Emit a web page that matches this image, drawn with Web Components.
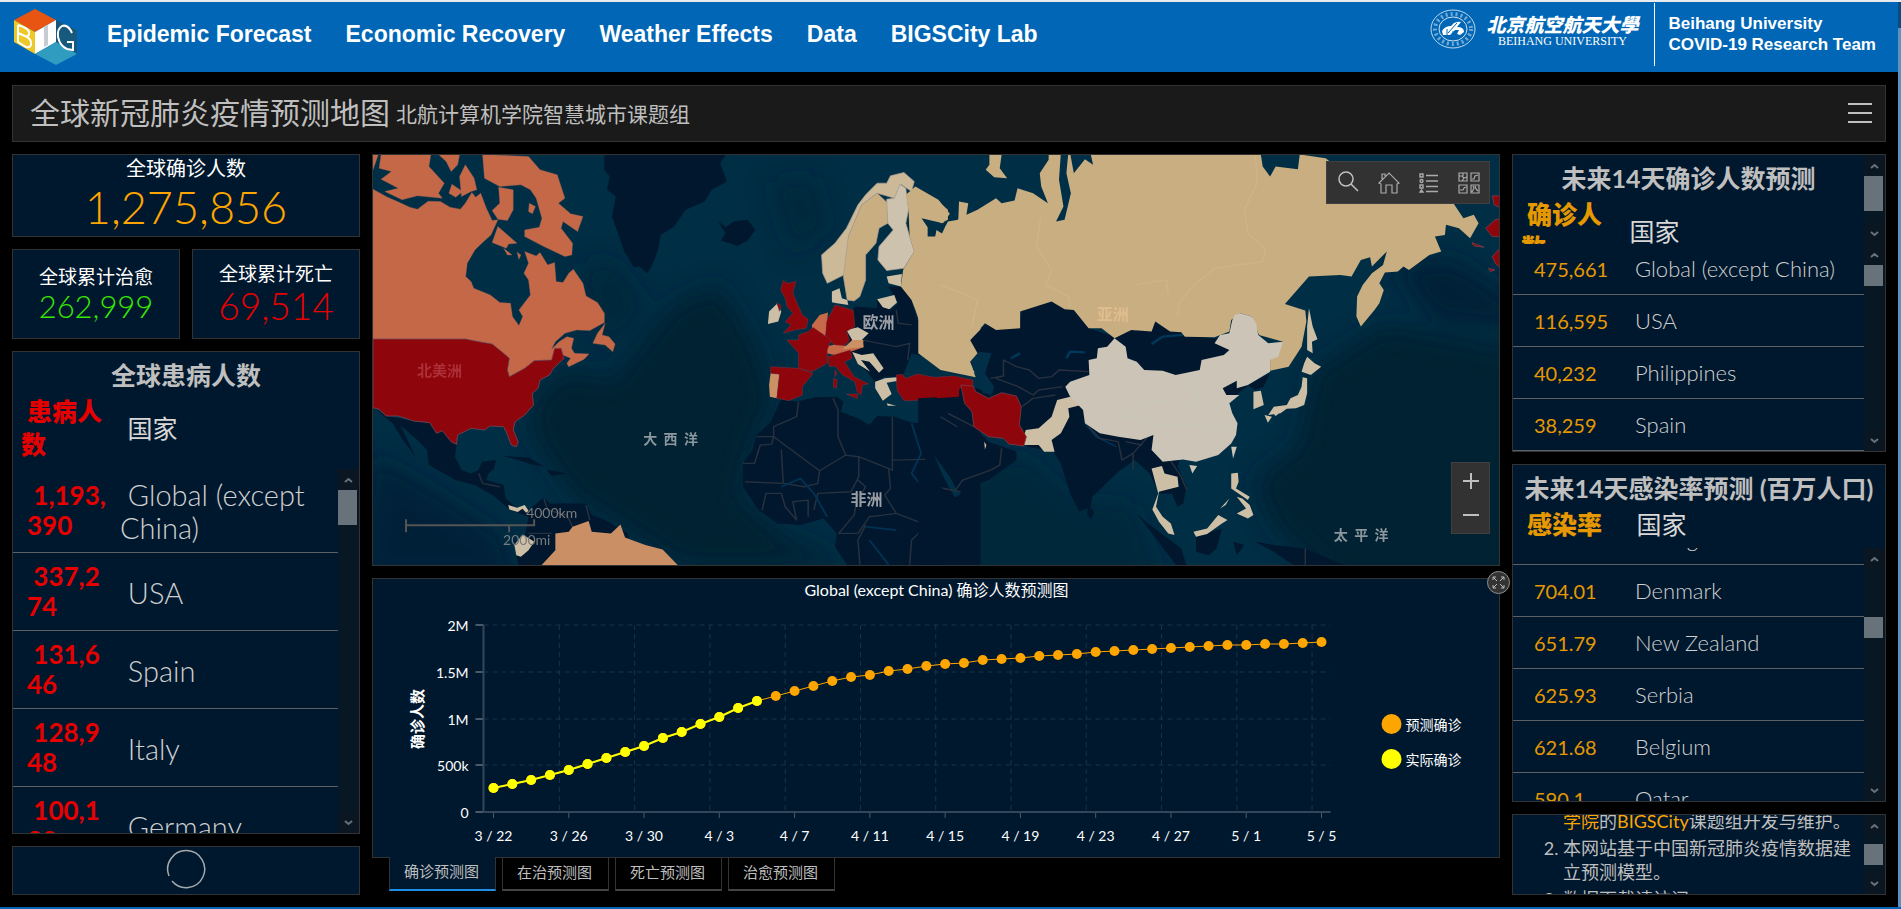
<!DOCTYPE html>
<html lang="zh-CN">
<head>
<meta charset="utf-8">
<title>全球新冠肺炎疫情预测地图</title>
<style>
  html, body { margin: 0; background: #000; }
  body { font-family: Lato, "Noto Sans CJK SC", sans-serif; color: #bfbfbf; }
</style>
</head>
<body>
<epidemic-app></epidemic-app>

<script>
const define = (name, html, setup) => {
  const template = document.createElement('template');
  template.innerHTML = html;
  customElements.define(name, class extends HTMLElement {
    connectedCallback() {
      if (this.shadowRoot) return;
      const root = this.attachShadow({ mode: 'open' });
      root.append(template.content.cloneNode(true));
      if (setup) setup(this, root);
    }
  });
};

/* ---------- header ---------- */
define('site-header', `
<style>
  :host { display: flex; align-items: stretch; height: 70px; background: #0066b5; color: #fff;
          font-family: "Liberation Sans", sans-serif; font-weight: bold; }
  .logo { width: 64px; margin: 6px 31px 0 12px; }
  nav { display: flex; align-items: center; gap: 34px; font-size: 23px; line-height: 26px; flex: 1; padding-bottom: 6px; }
  a { color: inherit; text-decoration: none; white-space: nowrap; }
  .seal { margin: 7px 10px 0 0; flex: none; }
  .name { display: flex; flex-direction: column; align-items: center; margin: 10px 16px 0 0; }
  .cn { font: italic 900 19px/23px "Noto Sans CJK SC", sans-serif; white-space: nowrap; }
  .en { font: 12px/12px "Liberation Serif", serif; white-space: nowrap; }
  .team { border-left: 1px solid #fff; margin: 1px 22px 6px 0; padding: 10px 0 0 13px; font-size: 17px; line-height: 21px; white-space: nowrap; }
</style>
<a class="logo" href="#" aria-label="BIG">
  <svg width="66" height="58" viewBox="0 0 66 58">
    <path d="M2 12 23 1 44 12 23 24Z" fill="#e85412"/>
    <path d="M2 12 23 24V46L2 34Z" fill="#ecc926"/>
    <path d="M23 24 44 12V34L23 46Z" fill="#fff"/>
    <path d="M32 19 36 17V37L32 39Z" fill="#c9cbd3"/>
    <path d="M44 12 65 22V46L44 34Z" fill="#16597c"/>
    <path d="M23 46 44 34 65 46 44 57Z" fill="#309cc0"/>
    <path d="M6 17V34L14 39Q20 40 19 34 18 30 13 28 18 29 17 24 16 20 6 17M6 25 13 28" fill="none" stroke="#fff" stroke-width="2"/>
    <path d="M60 25Q56 16 50 18 45 21 46 29 48 38 55 41L61 42V34H55" fill="none" stroke="#fff" stroke-width="2"/>
  </svg>
</a>
<nav>
  <a href="#">Epidemic Forecast</a><a href="#">Economic Recovery</a><a href="#">Weather Effects</a><a href="#">Data</a><a href="#">BIGSCity Lab</a>
</nav>
<svg class="seal" width="46" height="40" viewBox="0 0 46 40" fill="none" stroke="#fff">
  <ellipse cx="23" cy="20" rx="22" ry="19" stroke-width="1" opacity=".75"/>
  <ellipse cx="23" cy="20" rx="18" ry="15" stroke-width="4" stroke-dasharray="2 3" opacity=".45"/>
  <ellipse cx="23" cy="20" rx="14" ry="12" stroke-width="1" opacity=".8"/>
  <path d="M12 22Q15 17 21 17L24 14Q29 12 31 13L27 18Q34 18 34 23L30 26 27 25 29 21H25L20 26H13Z" fill="#fff" stroke="none"/>
  <path d="M18 24 27 14M17 20V26M23 22V27" stroke="#0066b5" stroke-width="1"/>
</svg>
<div class="name"><span class="cn">北京航空航天大學</span><span class="en">BEIHANG UNIVERSITY</span></div>
<div class="team">Beihang University<br>COVID-19 Research Team</div>
`);

define('title-bar', `
<style>
  :host { display: flex; align-items: center; height: 57px; box-sizing: border-box; border: 1px solid #333; background: #1a1a1a; padding: 0 11px 4px 17px; }
  h1 { font-size: 30px; line-height: 44px; font-weight: 400; margin: 0 6px 0 0; white-space: nowrap; }
  .sub { font-size: 21px; line-height: 30px; flex: 1; padding-top: 5px; }
  button { background: none; border: 0; padding: 0; width: 28px; height: 28px; }
  svg { display: block; }
</style>
<h1>全球新冠肺炎疫情预测地图</h1><span class="sub">北航计算机学院智慧城市课题组</span>
<button aria-label="菜单"><svg width="28" height="28" stroke="#bfbfbf" stroke-width="2"><path d="M2 6H26M2 15H26M2 24H26"/></svg></button>
`);

/* ---------- panels ---------- */
define('stat-card', `
<style>
  :host { display: flex; flex-direction: column; align-items: center; justify-content: center; box-sizing: border-box;
          border: 1px solid #333; background: #00182e; min-width: 0; padding-bottom: 6px; }
  .label { color: #fff; font-size: var(--label, 19px); line-height: 29px; }
  .value { color: var(--tone); font-size: var(--size); line-height: var(--line, 36px); font-weight: var(--weight, 400); }
</style>
<span class="label"><slot name="label"></slot></span><span class="value"><slot></slot></span>
`);

define('scroll-track', `
<style>
  :host { display: flex; flex-direction: column; width: 21px; flex: none; background: #081724; }
  button { border: 0; padding: 0; background: #0a1622; height: 21px; width: 21px; flex: none; display: grid; place-items: center; }
  .before { flex: var(--before, 0) 0 0; }
  .after { flex: var(--after, 1) 0 0; }
  .thumb { height: var(--thumb, 21px); width: 19px; background: #68727b; flex: none; }
</style>
<button aria-label="向上"><svg width="9" height="6" fill="none" stroke="#68727b" stroke-width="2"><path d="M1 5 4.500 2 8 5"/></svg></button>
<div class="before"></div><div class="thumb"></div><div class="after"></div>
<button aria-label="向下"><svg width="9" height="6" fill="none" stroke="#68727b" stroke-width="2"><path d="M1 1 4.500 4 8 1"/></svg></button>
`);

define('rank-list', `
<style>
  :host { display: flex; flex-direction: column; box-sizing: border-box; border: 1px solid #333; background: #00182e; min-height: 0; overflow: hidden; }
  .head { height: var(--head); flex: none; display: flex; overflow: hidden; }
  .head > div { flex: 1; min-width: 0; height: var(--head); overflow: hidden; }
  h2 { margin: 0; padding-top: 7px; font-size: 25px; line-height: 33px; text-align: center; white-space: nowrap; }
  table { border-collapse: collapse; table-layout: fixed; width: 100%; }
  th { font-size: 25px; line-height: 33px; text-align: left; padding: 3px 0 0; word-break: break-all; font-weight: 400; }
  th:first-child { width: var(--th); padding: 3px 9px 0 8px; box-sizing: border-box; font-weight: 900; color: var(--tone); }
  th:last-child { color: #d8d8d8; }
  .body { flex: 1; min-height: 0; display: flex; }
  .rows { flex: 1; min-width: 0; overflow: hidden; }
  td { border-bottom: 1px solid #5c6064; height: 51px; padding: 0; font-size: 22px; line-height: 28px; font-weight: 300; color: #d0d0d0; }
  td:first-child { width: 122px; box-sizing: border-box; padding: 0 0 0 21px; color: var(--tone); font-size: 20px; font-weight: 400; }
  :host([large]) td { font-size: 29px; line-height: 33px; height: 60px; padding: 9px 0 8px; }
  :host([large]) td:first-child { width: 107px; padding: 8px 10px 9px 14px; font-size: 26px; line-height: 30px; font-weight: 700; word-break: break-all; color: var(--tone); }
  .top { --thumb: 35px; }
  .top[hidden] { display: none; }
</style>
<div class="head"><div><h2></h2><table><thead><tr><th scope="col"></th><th scope="col">&nbsp;国家</th></tr></thead></table></div><scroll-track class="top"></scroll-track></div>
<div class="body"><div class="rows"><table><tbody></tbody></table></div><scroll-track></scroll-track></div>
`, (host, root) => {
  root.querySelector('h2').textContent = host.getAttribute('heading');
  root.querySelector('th').textContent = '\u00a0' + host.getAttribute('measure');
  if (!host.hasAttribute('head-scroll')) root.querySelector('.top').hidden = true;
  const pad = host.hasAttribute('large') ? '\u00a0' : '';
  for (const row of host.getAttribute('rows').split(';')) {
    const tr = root.querySelector('tbody').insertRow();
    for (const cell of row.split('|')) tr.insertCell().textContent = pad + cell;
  }
  root.querySelector('.rows').scrollTop = Number(host.getAttribute('scroll') || 0);
});

define('loading-card', `
<style>
  :host { display: grid; place-items: center; box-sizing: border-box; border: 1px solid #333; background: #00182e; padding-bottom: 3px; }
  svg { display: block; }
</style>
<svg width="40" height="40" fill="none" stroke="#a3a8ac" stroke-width="1.500" role="img" aria-label="加载中"><path d="M6 32A18.500 18.500 0 1 0 3 27"/></svg>
`);

define('notes-card', `
<style>
  :host { display: flex; box-sizing: border-box; border: 1px solid #333; background: #00182e; min-height: 0; overflow: hidden; }
  .text { flex: 1; overflow: hidden; }
  ol { margin: 0; padding: 0 10px 0 50px; font-size: 18px; line-height: 24px; }
  li { margin-bottom: 3px; }
  a { color: #ffa500; text-decoration: none; }
</style>
<div class="text"><ol>
  <li>本网站由<a href="#">北京航空航天大学计算机<br>学院</a>的<a href="#">BIGSCity</a>课题组开发与维护。</li>
  <li>本网站基于中国新冠肺炎疫情数据建立预测模型。</li>
  <li>数据下载请访问</li>
</ol></div>
<scroll-track></scroll-track>
`, (host, root) => { root.querySelector('.text').scrollTop = 30; });

/* ---------- map ---------- */
define('world-map', `
<style>
  :host { display: block; position: relative; box-sizing: border-box; border: 1px solid #333; background: #002f47; min-height: 0; overflow: hidden; }
  .map { position: absolute; inset: 0; width: 100%; height: 100%; display: block; }
  .tools, .zoom { position: absolute; right: 9px; display: flex; box-sizing: border-box; background: #323232; border: 1px solid #3f3f3f; }
  .tools { top: 6px; height: 43px; padding-left: 2px; }
  .zoom { bottom: 31px; width: 39px; flex-direction: column; }
  button { border: 0; padding: 0; background: none; display: grid; place-items: center; width: 40px; height: 41px; }
  .zoom button { width: 37px; height: 35px; }
  svg { display: block; }
  text { font-family: "Noto Sans CJK SC", sans-serif; font-weight: 700; white-space: pre; }
  .sea { font-size: 14px; fill: #8c979e; }
  .scale { font-family: Lato, sans-serif; font-size: 14px; font-weight: 400; fill: #7b7b7b; }
</style>
<svg class="map" viewBox="0 0 1125 410" preserveAspectRatio="xMidYMid slice">
  <defs><filter id="soft" x="-20%" y="-20%" width="140%" height="140%"><feGaussianBlur stdDeviation="12"/></filter></defs>
  <rect width="1127" height="411" fill="#002e45"/>
  <g fill="#002033" filter="url(#soft)">
    <path d="M190 215 240 225 300 150 345 130 380 185 400 245 380 285 365 340 410 380 480 411H310L255 375 200 340 165 290 155 255Z"/>
    <path d="M205 110 240 105 275 150 230 200Z M395 30 440 20 455 70 420 100Z" opacity=".5"/>
    <path d="M0 300 60 335 130 380 145 430H-20Z" opacity=".7"/>
    <path d="M940 215 1010 170 1147 195V431H960L900 370 880 325 925 290Z"/>
    <path d="M590 320 650 300 700 345 760 350 790 431H590Z" opacity=".5"/>
    <path d="M1020 110 1080 105 1147 150V175L1060 165Z" opacity=".9"/>
  </g>
  <g transform="translate(-13 -15) scale(.3827 .3333)" stroke-linejoin="round">
    <g fill="#00172d">
      <path d="M638 44H955L940 70 958 125 918 150 900 185 850 210 820 260 785 285 778 330 765 370 750 400 730 380 715 382 690 335 672 275 658 230 668 170 645 150 652 110 638 90Z"/>
      <path d="M935 245 955 262 975 245 1012 240 1032 270 1012 302 985 318 965 310 942 302 955 280Z"/>
      <path d="M34 800 68 828 140 843 182 848 200 880 215 872 252 913 248 950 265 990 290 1000 310 990 318 965 355 960 350 985 335 1000 330 1020 375 1035 380 1075 405 1100 440 1110 480 1072 495 1090 590 1090 605 1125 640 1140 700 1180 700 1280H415L405 1230 430 1190 440 1130 390 1108 350 1068 300 1035 250 1020 180 975 175 930 150 900 105 855 145 950 115 905 85 850Z"/>
      <path d="M372 948 440 952 482 980 445 972 400 955Z M488 988 540 1000 500 1008Z"/>
      <path d="M1290 500 1350 505 1350 480 1385 510 1405 490 1380 440 1415 440 1440 480 1455 540 1530 590 1525 635 1490 655 1440 640 1420 700 1410 710 1370 710 1345 725 1320 690 1280 640 1275 590Z"/>
      <path d="M1100 778 1140 785 1190 772 1245 770 1262 785 1255 815 1300 835 1330 855 1350 828 1395 830 1440 848 1480 850 1485 780 1620 765V1280H1275L1240 1220 1245 1180 1210 1135 1150 1155 1090 1150 1040 1110 1000 1040 1000 970 1025 930 1035 885 1070 850Z"/>
    </g>
    <path d="M1478 888 1500 925 1530 1005 1560 1068" fill="none" stroke="#002f47" stroke-width="17"/>
    <g fill="none" stroke="#26313f" stroke-width="4">
      <path d="M1145 785 1140 830 1080 860V890L1200 992 1268 945 1248 890V810L1235 775M1080 890 1075 912 1045 915 1030 970H1000M1080 890H1035M1100 928 1105 1030 1005 1025M1268 945 1302 950 1390 990V830M1390 960 1475 958M1200 992 1195 1030 1160 1040 1105 1030M1302 950V1010L1282 1055 1195 1060 1185 1110M1380 985 1385 1045 1370 1065 1400 1120 1480 1155 1520 1160M1050 1110 1060 1060 1100 1060 1110 1100 1140 1140 1130 1085 1170 1080 1170 1130M1300 1060 1290 1125 1250 1180 1300 1180 1330 1130 1400 1120M1475 1040 1500 1130 1480 1155 1440 1200 1435 1274M1320 1155 1300 1200 1305 1274M1500 1040 1568 1055M1310 600 1400 620 1435 610 1430 660M1400 510 1405 550 1440 555M1300 1020 1320 1040 1310 1060"/>
      <path d="M310 1000 320 1030 365 1040M480 1075 490 1110 540 1125 555 1160M590 1095 600 1140M440 1180 500 1180"/>
    </g>
    <path d="M1440 850 1465 940 1440 1000 1475 1050 1465 1140M1100 1040 1150 1015 1185 1060 1220 1130M1320 1160 1400 1170M1330 1200 1380 1274" fill="none" stroke="#013355" stroke-width="5"/>
    <g fill="#c46848" stroke="#9a6759" stroke-width="1">
      <path d="M34 148 72 172 92 182 130 202 150 208 178 184 210 185 235 202 262 208 275 190 292 158 302 172 315 160 330 205 345 242 360 240 342 285 318 310 300 330 280 370 276 410 290 425 297 445 340 465 365 488 393 490 398 530 415 557 425 530 415 510 445 465 440 420 428 400 440 370 430 335 460 348 470 338 490 375 508 368 512 425 530 428 545 400 557 388 582 430 590 468 620 488 638 520 638 548 600 572 565 570 535 580 510 605 500 628 520 605 540 590 558 595 552 625 560 640 598 642 585 658 545 680 540 670 550 655 530 645 500 660 455 662 430 685 390 710 385 690 390 655 370 635 345 612 310 605 275 597H34Z"/>
      <path d="M640 550 620 580 608 610 640 615 660 635 666 612 650 590 632 585Z M55 44H185L180 80 220 130 205 160 215 175 150 168 110 180 65 155 100 145 55 118 82 95 50 85Z M205 44H260L255 75 238 95 225 65Z M275 75 298 115 305 150 290 155 265 170 260 110Z M240 133 268 155 250 172 232 160Z M320 44 440 50 470 90 515 105 535 175 518 190 550 222 582 230 568 275 530 245 525 265 555 310 553 345 535 350 480 320 430 290V270L468 262 475 235 460 175 445 150 420 135 365 140 325 115Z M362 142 400 150V210L385 242 360 238 345 212 365 190Z M360 260 410 310 388 312 382 325 345 308Z M442 190 458 200 450 222 440 215Z M375 325 397 345 385 345Z M410 337 420 345 415 358Z M34 44H48L34 90Z"/>
    </g>
    <path d="M34 597H275L310 605 345 612 370 635 390 655 385 690 390 710 430 685 455 662 500 660 508 625 525 625 533 655 505 685 495 705 470 720 465 745 450 760 453 795 430 825 405 845 400 870 413 905 408 920 395 915 385 885 375 860 340 858 325 870 290 865 255 885 252 913 238 905 215 872 200 880 182 848 140 843 100 828 68 828 50 808 34 803Z" fill="#8e050b" stroke="#725064" stroke-width="2"/>
    <path d="M470 1280 510 1230V1180L545 1175 555 1160 597 1143 605 1175 655 1180 680 1153 692 1192 745 1215 790 1228 834 1280Z" fill="#ca8f65"/>
    <g fill="#ccbfa5">
      <path d="M387 1095 410 1103 430 1095 440 1112 434 1118 424 1106 412 1116 390 1108Z M403 1215 425 1183 455 1205 440 1230 420 1250 408 1245Z"/>
      <path d="M1088 492 1100 515 1092 545 1065 552 1068 515Z M1232 455 1252 445 1258 475 1272 480 1275 495 1245 490 1232 487Z M1375 410 1415 402 1412 440 1380 430Z M1350 478 1395 465 1402 488 1382 508 1365 502Z M1270 570 1300 562 1328 580 1310 600 1285 600Z M1285 636 1310 645 1340 640 1367 685 1355 698 1330 665 1308 660 1332 695 1300 672Z M1345 725 1370 715 1402 712 1405 722 1375 728 1388 762 1365 782 1345 745Z M1375 790 1400 797 1378 797Z M1480 822 1490 822 1482 866 1476 850Z"/>
    </g>
    <g stroke="#a99d92" stroke-width="2">
      <path d="M1205 345 1240 310 1270 265 1300 195 1320 165 1350 130 1375 130 1385 108 1420 98 1447 125 1440 155 1412 133 1395 175 1350 160 1310 195 1275 290 1272 400 1220 430 1208 400Z" fill="#cbb998"/>
      <path d="M1350 160 1378 190V250L1355 265 1347 310 1320 345V420L1305 470 1290 483 1272 480 1262 410 1275 290 1310 195Z" fill="#c9ae81"/>
      <path d="M1375 178 1395 175 1410 133 1425 145 1432 210 1425 250 1435 290 1447 335 1420 385 1375 392 1352 360 1355 320 1392 270 1378 250Z" fill="#ccc2ae"/>
    </g>
    <path d="M1450 140 1510 180 1540 222 1522 250 1466 235 1482 262 1482 295 1500 300 1505 270 1530 288 1528 260 1568 235H1620V700L1568 690 1500 655 1525 640 1530 590 1495 570 1462 550 1450 510 1440 480 1412 440 1418 390 1447 335 1435 290 1432 210 1425 165Z" fill="#c9ae81"/>
    <path d="M1180 555 1200 525 1222 518 1215 590 1205 580 1180 572Z M1215 620 1245 612 1280 620 1288 600 1312 600 1315 622 1280 635 1240 645 1218 640Z" fill="#c76a49"/>
    <path d="M1072 700 1095 703 1088 775 1070 770 1068 735Z M1285 600H1314V622L1260 628Z" fill="#cc9065"/>
    <g fill="#8e050b" stroke="#7c4654" stroke-width="1">
      <path d="M1105 422 1115 430 1138 425 1130 460 1145 500 1155 525 1170 538 1165 565 1135 570 1105 580 1125 555 1110 545 1130 520 1115 500 1110 475 1098 450Z M1088 488 1100 498 1095 515Z"/>
      <path d="M1240 495 1270 505 1288 512 1292 560 1270 575 1278 600 1265 617 1240 615 1215 595 1218 545Z"/>
      <path d="M1115 600 1145 600V585L1170 575 1183 562 1230 600 1220 630V670L1180 695 1145 685V640Z"/>
      <path d="M1072 680 1145 685 1183 700 1155 740 1155 765 1120 782 1088 775 1095 703 1072 700Z"/>
      <path d="M1222 650 1245 642 1280 630 1285 655 1265 665 1290 710 1328 732 1312 735 1308 765 1298 755 1292 725 1260 705 1240 678 1225 680Z M1270 762H1300L1298 776Z M1236 715 1246 720 1244 745 1236 742Z M1240 690 1246 700 1240 710Z"/>
      <path d="M1400 705 1415 703 1425 715 1455 702 1500 712 1550 708 1600 720V768L1545 770 1490 780 1420 782 1402 750Z"/>
    </g>
  </g>
  <g transform="translate(567 -15) scale(.37 .3333)" stroke-linejoin="round">
    <g fill="#00172d">
      <path d="M-60 775 20 770 60 740 100 745 140 770 80 670 80 600 120 555 210 565 220 510 300 485 360 510 400 565 470 590 580 545 700 590 780 600 850 720 700 850 600 960 650 940 640 980 665 1040 655 1090 640 1100 625 1060 590 1060 565 1000 525 960 480 995 410 1070 405 1100 375 1114 350 1060 325 970 305 935 235 920 130 780 90 860 130 905 205 935 205 960 130 1020 45 1052 25 1010-60 880Z"/>
      <path d="M0 1040 40 1080 90 1115 20 1200 0 1274H-60V1000Z M398 1095 415 1115 408 1137 396 1125Z M530 1120 560 1150 650 1225 665 1280H640Z M690 1190 760 1165 745 1225 725 1245 690 1235Z M850 1205 900 1215 985 1225 1100 1280H960L900 1235Z M790 1205 820 1215 800 1245Z M830 735 890 700 872 740 850 750Z"/>
    </g>
    <path d="M80 660 105 635 138 640 120 700 145 740 140 762 115 760 108 720 88 690Z" fill="#002f47"/>
    <path d="M340 655 350 635 390 637M190 655 215 640M570 612 600 590 655 585" fill="none" stroke="#01375b" stroke-width="7"/>
    <path d="M390 850 420 890 475 920" fill="none" stroke="#01375b" stroke-width="4"/>
    <g fill="none" stroke="#29313f" stroke-width="4">
      <path d="M135 715 170 708V660L205 680 240 690 265 715 300 710 320 690 400 695M150 715 210 740 250 765 265 750 330 740M220 800 250 775 310 765M400 860 430 895 480 905 490 960 520 940 560 890M520 940V990M20 820 90 860M40 1050 60 1020 135 990 160 975 165 925M620 960 650 1010 665 1050M0 830 45 860M985 1225V1274M500 905 545 915"/>
    </g>
    <path d="M0 290 12 262 20 245 48 240 50 185 75 190 70 225 100 210 150 175 165 190 200 182 208 145 250 160 290 190 272 140 268 100 292 60V44H865L870 80 890 110 905 80 965 88 970 44 1040 55 1200 190H1385L1412 235 1440 225 1453 250 1430 295 1400 265 1365 255 1362 285 1335 290 1352 335 1320 345 1265 390 1250 380 1235 395 1200 398 1185 430 1197 450 1185 490 1172 510 1135 560 1123 530 1125 470 1140 435 1165 400 1195 375 1205 335 1165 380 1160 352 1135 360 1110 410 1080 405 995 410 930 492 985 512 988 545 975 620 940 680 890 692V660L925 605 860 585 840 530 810 520 785 540 780 575 740 592 660 590 650 577 620 575 580 545 570 575 515 570 470 595 435 565 400 565 360 510 335 508 300 485 215 515V565L150 570 120 550 80 600 100 640 80 665 95 712 0 690-60 640V290Z" fill="#c9ae81"/>
    <path d="M325 40H345L340 100 352 160 335 240 312 245 332 200 320 120Z M350 40H405L412 75 390 58 360 100Z" fill="#002f47"/>
    <path d="M132 44H165L160 85 180 115 145 112 122 90 132 75Z M0 190 20 210 20 240 0 250Z" fill="#c9ae81"/>
    <path d="M850 44 855 130 820 210 830 280 878 330 870 365 740 385 680 440 645 490 640 530M270 235 260 320 300 390 285 435 345 470 350 500M525 435 610 420 615 465M0 435 60 460 100 480 85 560" fill="none" stroke="#ceb88c" stroke-width="4" opacity=".7"/>
    <g fill="#ccbfa5">
      <path d="M995 505 1005 560 1018 598 1003 605 1005 640 990 630V560Z M990 650 1010 670 1028 680 1000 705 975 695 982 670Z M978 712 990 715 990 760 982 795 960 805 935 806 918 820 885 825 900 800 935 795 945 775 965 765 975 740Z M875 825 895 830 884 848Z M900 822 920 815 905 828Z"/>
      <path d="M845 755 865 752 873 795 845 808Z M350 770 380 795 345 805 348 830 325 880 300 900 308 935 280 935 265 915 220 915 230 870 265 865 300 830 315 780Z"/>
      <path d="M570 985 598 978 605 1000 640 1010 643 1040 600 1052 590 1055 582 1100 600 1130 622 1150 632 1185 615 1180 590 1145 572 1108 588 1060Z M683 1175 720 1165 750 1125 775 1140 760 1150 720 1182 690 1190Z M785 1000 803 998 805 1025 798 1045 835 1070 830 1080 785 1045Z M800 1070 815 1075 835 1095 845 1125 830 1135 800 1120 825 1105Z M780 1075 770 1095 755 1105Z M118 905 124 915 120 928Z"/>
    </g>
    <path d="M470 595 500 620 505 655 530 665 550 690 600 692 635 705 700 690 705 660 765 645 780 630 740 610 755 585 780 580 788 540 795 525 810 520 840 530 852 550 858 585 885 610 925 605 912 650 890 660V695L830 735 800 745 800 722 762 745 772 765 807 765 780 790 788 820 802 850 798 885 785 910 750 945 690 965 655 958 600 965 570 930 575 885 540 900 480 890 430 880 390 850 385 810 350 770 337 740 350 725 402 705 400 660 422 655 425 625 450 620Z M785 920 800 920 790 955Z M672 975 693 978 680 1000Z" fill="#ccc5b7"/>
    <path d="M660 740 700 720 695 800M480 820 590 860 700 855 760 870M560 790 600 780" fill="none" stroke="#c7c8bb" stroke-width="4"/>
    <g fill="#8e050b" stroke="#7c4654" stroke-width="2">
      <path d="M-10 718 40 708 52 720 50 770-10 775Z" stroke="none"/>
      <path d="M55 735 88 738 95 755 130 775 165 758 205 768 218 800 213 855 232 890 225 918 185 912 170 895 130 890 90 860 85 815 65 790Z"/>
      <path d="M1490 168H1515V205L1495 195Z M1472 265 1500 238H1515V290H1490Z M1490 350 1515 320V388L1498 370Z M1435 308 1468 322 1440 318Z M1480 385 1497 390 1485 395Z"/>
    </g>
  </g>
  <text x="44" y="221" font-size="15" fill="#ad3038">北美洲</text>
  <text x="489" y="173" font-size="16" fill="#9c9fa5">欧洲</text>
  <text x="723" y="165" font-size="16" fill="#e0bd8e">亚洲</text>
  <text x="477" y="350" font-size="16" fill="#9c9fa5">非洲</text>
  <text class="sea" x="270" y="289">大&#160;&#160;西&#160;&#160;洋</text>
  <text class="sea" x="960" y="385">太&#160;&#160;平&#160;&#160;洋</text>
  <path d="M33 364V377M33 370H136" stroke="#555" stroke-width="2"/><path d="M136 370H161M161 364V371M136 370V377" stroke="#555" stroke-width="2" fill="none"/>
  <text class="scale" x="153" y="363">4000km</text>
  <text class="scale" x="130" y="390">2000mi</text>
</svg>
<div class="tools">
  <button aria-label="搜索"><svg width="24" height="24" fill="none" stroke="#bfbfbf" stroke-width="1.500"><circle cx="9" cy="8" r="7"/><path d="M14 13 21 20"/></svg></button>
  <button aria-label="主页"><svg width="22" height="22" fill="none" stroke="#aaa" stroke-width="1.200"><path d="M1 11 11 1 21 11 19 12V21H14V13H8V21H3V12ZM4 7V2H7V4"/></svg></button>
  <button aria-label="图例"><svg width="20" height="20" fill="none" stroke="#aaa" stroke-width="1.400"><path d="M7 2.500H19M7 8H19M7 13.500H19M7 18.500H19"/><path d="M1 1H4V4H1ZM1 12H4V15H1ZM1 19H4L2.500 17Z"/><circle cx="2.500" cy="8" r="1.500"/></svg></button>
  <button aria-label="底图"><svg width="22" height="22" fill="none" stroke="#aaa" stroke-width="1.200"><path d="M1 1H9V9H1ZM13 1H21V9H13ZM1 13H9V21H1ZM13 13H21V21H13ZM1 4H4L6 6 9 5M5 1V4M4 9 6 6M14 7H16L17 4 20 3M2 18H5L6 16 8 15M14 20 16 16 15 14M17 14 18 17 20 19"/></svg></button>
</div>
<div class="zoom">
  <button aria-label="放大"><svg width="16" height="16" stroke="#bfbfbf" stroke-width="2"><path d="M8 0V16M0 8H16"/></svg></button>
  <button aria-label="缩小"><svg width="16" height="16" stroke="#bfbfbf" stroke-width="2"><path d="M0 7H16"/></svg></button>
</div>
`);

/* ---------- chart ---------- */
define('forecast-chart', `
<style>
  :host { display: block; position: relative; box-sizing: border-box; border: 1px solid #333; background: #00182e; min-height: 0; }
  .plot { position: absolute; inset: 0; width: 100%; height: 100%; display: block; }
  text { fill: #fff; font-size: 14px; }
  .expand { position: absolute; top: -8px; right: -11px; width: 23px; height: 23px; box-sizing: border-box; border: 1px solid #8f8f8f; border-radius: 50%; background: #333; padding: 0; display: grid; place-items: center; }
</style>
<svg class="plot" viewBox="0 0 1125 278"></svg>
<button class="expand" aria-label="展开"><svg width="13" height="13" fill="none" stroke="#bbb" stroke-width="1"><path d="M1 4V1H4M1 1 5 5M9 1H12V4M12 1 8 5M1 9V12H4M1 12 5 8M12 9V12H9M12 12 8 8"/></svg></button>
`, (host, root) => {
  const left = 110, right = 957, top = 46, bottom = 233, first = 120, last = 948;
  const levels = [210, 206, 202, 197, 192, 186, 180, 174, 168, 160, 154, 146, 139, 130, 123, 118, 113, 108, 103, 99, 97, 93, 91, 88, 86,
    85, 82, 81, 80, 78, 77, 76, 74, 73, 72, 71, 70, 69, 68, 67, 67, 66, 66, 65, 64];
  const known = 15, step = (last - first) / (levels.length - 1);
  const points = levels.map((y, i) => [first + i * step, y - 1]);
  const days = ['3 / 22', '3 / 26', '3 / 30', '4 / 3', '4 / 7', '4 / 11', '4 / 15', '4 / 19', '4 / 23', '4 / 27', '5 / 1', '5 / 5'];
  const line = (list, colour, width) => `<polyline points="${list.join(' ')}" fill="none" stroke="${colour}" stroke-width="${width}"/>` +
    list.map(([x, y]) => `<circle cx="${x}" cy="${y}" r="5" fill="${colour}"/>`).join('');
  let s = '<text x="563" y="17" text-anchor="middle" style="font-size:16px">Global (except China) 确诊人数预测图</text>';
  s += '<text transform="translate(49 140) rotate(-90)" text-anchor="middle" style="font-size:15px;font-weight:700">确诊人数</text>';
  ['2M', '1.5M', '1M', '500k', '0'].forEach((label, i) => {
    const y = Math.round(top + i * (bottom - top) / 4);
    s += `<text x="95" y="${y + 6}" text-anchor="end">${label}</text><path d="M${left - 8} ${y}H${left}" stroke="#4a5a69" stroke-width="2"/>`;
    if (i < 4) s += `<path d="M${left} ${y}H${right}" stroke="#1b3246" stroke-dasharray="5 4"/>`;
  });
  days.forEach((label, i) => {
    const x = first + i * 4 * step;
    s += `<text x="${x}" y="262" text-anchor="middle">${label}</text><path d="M${x} ${bottom}V${bottom + 6}" stroke="#4a5a69" stroke-width="1"/>`;
    if (i < 11) s += `<path d="M${x + 3.5 * step} ${top}V${bottom}" stroke="#1b3246" stroke-dasharray="5 4"/>`;
  });
  s += `<path d="M${left} ${top}V${bottom}H${right}" fill="none" stroke="#33475a" stroke-width="2"/>`;
  s += line(points, '#ffa500', 1) + line(points.slice(0, known), '#ffff00', 2);
  s += '<circle cx="1018" cy="145" r="10" fill="#ffa500"/><text x="1032" y="151">预测确诊</text>';
  s += '<circle cx="1018" cy="180" r="10" fill="#ffff00"/><text x="1032" y="186">实际确诊</text>';
  root.querySelector('.plot').innerHTML = s;
});

define('chart-tabs', `
<style>
  :host { display: flex; gap: 6px; height: 37px; padding-left: 17px; align-items: flex-start; }
  button { width: 107px; height: 33px; box-sizing: border-box; border: 1px solid #333; border-top: 0; border-bottom: 2px solid #444; background: #000;
           color: #bfbfbf; font: 15px/22px Lato, "Noto Sans CJK SC", sans-serif; padding: 0 2px 4px 0; }
  [aria-selected=true] { position: relative; margin-top: -1px; height: 34px; background: #00182e; border-bottom-color: #1f8ee6; }
</style>
<button role="tab" aria-selected="true">确诊预测图</button><button role="tab">在治预测图</button><button role="tab">死亡预测图</button><button role="tab">治愈预测图</button>
`, host => host.setAttribute('role', 'tablist'));

/* ---------- page ---------- */
define('epidemic-app', `
<style>
  :host { display: flex; flex-direction: column; height: 100vh; min-height: 720px; box-sizing: border-box; border-top: 2px solid #e8ecef; border-bottom: 2px solid #0066b5;
          background: linear-gradient(#0b4b80 26px, #5b92c0 26px) right / 3px 100% no-repeat; padding-right: 3px; }
  main { flex: 1; min-height: 0; display: grid; grid-template-columns: 348px minmax(0, 1fr) 374px; grid-template-rows: auto minmax(0, 1fr); gap: 12px; padding: 13px 12px 12px; background: #000; }
  title-bar { grid-column: 1 / -1; }
  .col { display: grid; gap: 12px; min-height: 0; }
  .left { grid-template-rows: 83px 90px minmax(0, 1fr) 49px; }
  .pair { display: grid; grid-template-columns: 1fr 1fr; gap: 12px; }
  .mid { grid-template-rows: minmax(0, 412fr) minmax(0, 317fr); }
  .chart { display: grid; grid-template-rows: minmax(0, 1fr) auto; }
  .right { grid-template-rows: minmax(0, 298fr) minmax(0, 338fr) minmax(0, 81fr); }
  .confirmed { --label: 20px; --size: 45px; --line: 48px; --tone: #ffa500; --weight: 300; }
  .cured { --size: 31px; --line: 30px; --tone: #38e600; --weight: 300; }
  .dead { --size: 37px; --tone: #e60000; --weight: 300; }
  .sick { --head: 117px; --th: 108px; --tone: #e60000; --thumb: 35px; }
  .cases { --head: 89px; --th: 110px; --tone: #e69800; }
  .rate { --head: 83px; --th: 117px; --tone: #e69800; --before: 1; --after: 3; }
  .notes { --before: 1; }
</style>
<site-header></site-header>
<main>
  <title-bar></title-bar>
  <div class="col left">
    <stat-card class="confirmed"><span slot="label">全球确诊人数</span>1,275,856</stat-card>
    <div class="pair">
      <stat-card class="cured"><span slot="label">全球累计治愈</span>262,999</stat-card>
      <stat-card class="dead"><span slot="label">全球累计死亡</span>69,514</stat-card>
    </div>
    <rank-list class="sick" large heading="全球患病人数" measure="患病人数" rows="1,193,390|Global (except China);337,274|USA;131,646|Spain;128,948|Italy;100,132|Germany"></rank-list>
    <loading-card></loading-card>
  </div>
  <div class="col mid">
    <world-map></world-map>
    <div class="chart"><forecast-chart></forecast-chart><chart-tabs></chart-tabs></div>
  </div>
  <div class="col right">
    <rank-list class="cases" head-scroll scroll="1" heading="未来14天确诊人数预测" measure="确诊人数" rows="475,661|Global (except China);116,595|USA;40,232|Philippines;38,259|Spain"></rank-list>
    <rank-list class="rate" scroll="35" heading="未来14天感染率预测 (百万人口)" measure="感染率" rows="|Portugal;704.01|Denmark;651.79|New Zealand;625.93|Serbia;621.68|Belgium;590.1|Qatar"></rank-list>
    <notes-card class="notes"></notes-card>
  </div>
</main>
`);
</script>
</body>
</html>
